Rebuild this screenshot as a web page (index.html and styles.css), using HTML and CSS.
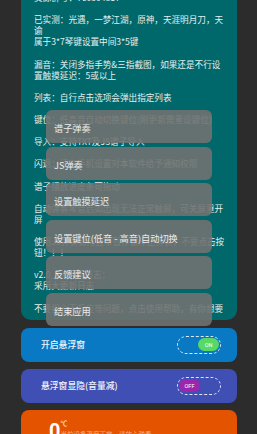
FILE: index.html
```html
<!DOCTYPE html>
<html lang="zh-CN">
  <head>
    <meta charset="UTF-8" />
    <meta name="viewport" content="width=device-width, initial-scale=1.0" />
    <title>弹琴助手</title>
    <link rel="stylesheet" href="styles.css">
  </head>
  <body>
    <main class="page">
      <section class="notice">
        <p>资源群号：760304817</p>
        <p>已实测：光遇，一梦江湖，原神，天涯明月刀，天<br>谕<br>属于3*7琴键设置中间3*5键</p>
        <p>漏音：关闭多指手势&amp;三指截图，如果还是不行设<br>置触摸延迟：5或以上</p>
        <p>列表：自行点击选项会弹出指定列表</p>
        <p>键位：低高音自动切换键位(刚更新需重设键位)</p>
        <p>导入：支持TXT及JS谱子导入</p>
        <p>闪退：请在手机设置对本软件给予通知权限</p>
        <p>谱子播放进度条可拖动</p>
        <p>自动弹奏琴谱后如出现无法正常触屏，可关屏重开<br>屏</p>
        <p>使用JS弹奏请用自带暂停键停止弹奏，不要点击按<br>钮！！！</p>
        <p>v2.0_1.0更新日志：<br>采用大更新日志</p>
        <p>不要担心无反应等问题，点击使用帮助，有你想要</p>
      </section>

      <section class="option option-blue">
        <span class="option-label">开启悬浮窗</span>
        <span class="switch switch-on"><span class="knob">ON</span></span>
      </section>

      <section class="option option-indigo">
        <span class="option-label">悬浮窗显隐(音量减)</span>
        <span class="switch switch-off"><span class="knob">OFF</span></span>
      </section>

      <section class="temp-card">
        <span class="temp-value">0</span><span class="temp-unit">℃</span>
        <span class="temp-note">当前设备温度正常，请放心弹奏</span>
      </section>
    </main>

    <!-- popup list shown over the notice -->
    <ul class="popup-menu">
      <li>谱子弹奏</li>
      <li>JS弹奏</li>
      <li>设置触摸延迟</li>
      <li>设置键位(低音 - 高音)自动切换</li>
      <li>反馈建议</li>
      <li>结束应用</li>
    </ul>
  </body>
</html>
```

FILE: styles.css
```css
html,
body {
  margin: 0;
  padding: 0;
  height: 434px;
  overflow: hidden;
}

body {
  background: #2c2c2c;
  font-family: "Noto Sans CJK SC", "Noto Sans", sans-serif;
  color: #ffffff;
}

.page {
  display: flex;
  flex-direction: column;
  gap: 7px;
  padding: 0 20px 0 21px;
}

.notice {
  margin-top: -8px;
  margin-bottom: 1px;
  background: #00676a;
  border-radius: 0 0 10px 10px;
  padding: 0 8px 6px 13px;
  font-size: 8.6px;
  line-height: 11.1px;
  color: #e4efee;
}

.notice p {
  margin: 0 0 11.1px 0;
  white-space: nowrap;
}

.notice p:last-child {
  margin-bottom: 0;
}

.option {
  height: 34px;
  border-radius: 8px;
  display: flex;
  align-items: center;
  justify-content: space-between;
  padding: 0 16px 0 20px;
}

.option-blue {
  background: #0a79c4;
}

.option-indigo {
  background: #3f4fb3;
}

.option-label {
  font-size: 8.8px;
  font-weight: 500;
  color: #f2f4fa;
}

.switch {
  box-sizing: border-box;
  width: 44px;
  height: 18px;
  border: 1px dashed rgba(255, 255, 255, 0.85);
  border-radius: 9px;
  display: flex;
  align-items: center;
  padding: 0 1px;
}

.switch-on {
  justify-content: flex-end;
}

.switch-off {
  justify-content: flex-start;
}

.knob {
  width: 21px;
  height: 13px;
  border-radius: 7px;
  display: flex;
  align-items: center;
  justify-content: center;
  font-family: Roboto, sans-serif;
  font-size: 5.5px;
  color: #ffffff;
}

.switch-on .knob {
  background: #58d867;
}

.switch-off .knob {
  background: #9b27ae;
}

.temp-card {
  height: 40px;
  background: #e35300;
  border-radius: 8px 8px 0 0;
  padding: 6px 0 0 28px;
  display: flex;
  align-items: flex-start;
}

.temp-value {
  font-family: Roboto, sans-serif;
  font-size: 20px;
  font-weight: 700;
  line-height: 30px;
}

.temp-unit {
  font-size: 7px;
  line-height: 12px;
  margin-top: 1px;
}

.temp-note {
  font-size: 6.5px;
  line-height: 8px;
  margin: 14px 0 0 -7px;
  color: rgba(255, 255, 255, 0.55);
}

.popup-menu {
  position: absolute;
  top: 110px;
  left: 46px;
  width: 166px;
  margin: 0;
  padding: 0;
  list-style: none;
  display: flex;
  flex-direction: column;
  gap: 3.5px;
}

.popup-menu li {
  height: 33px;
  box-sizing: border-box;
  padding: 3px 0 0 8px;
  display: flex;
  align-items: center;
  background: rgba(112, 114, 113, 0.9);
  border-radius: 6px;
  font-size: 9.2px;
  color: #ebebeb;
}
```
